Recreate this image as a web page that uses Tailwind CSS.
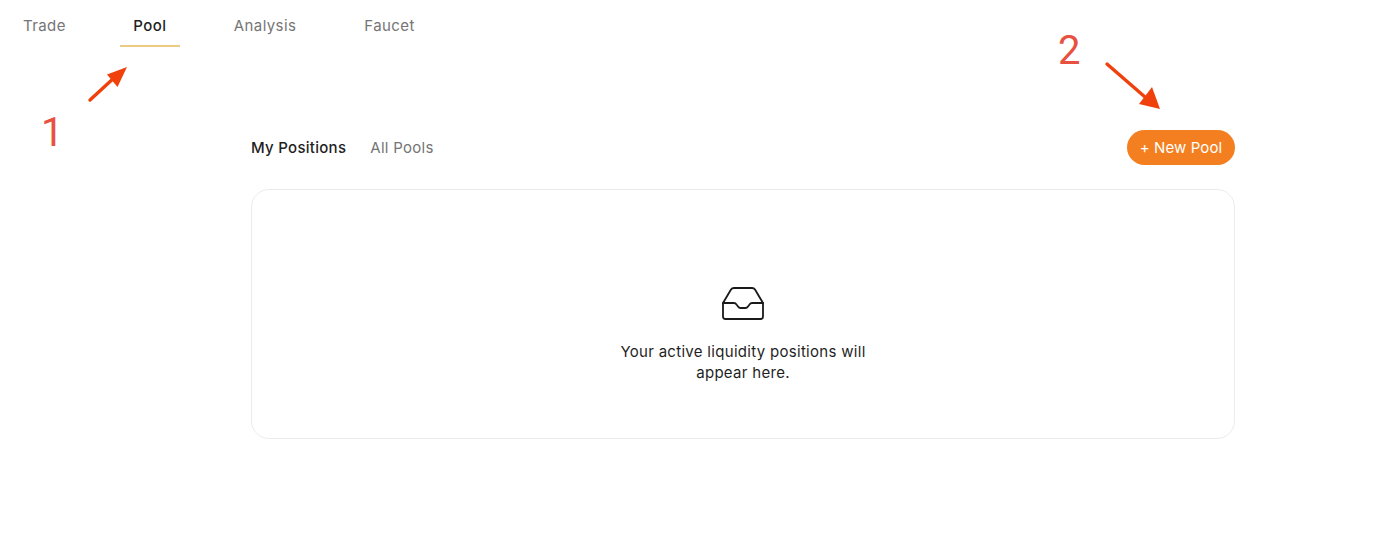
<!DOCTYPE html>
<html lang="en">
<head>
    <meta charset="UTF-8">
    <meta name="viewport" content="width=device-width, initial-scale=1.0">
    <title>Pool</title>
    <script src="https://cdn.jsdelivr.net/npm/@tailwindcss/browser@4"></script>
</head>
<body class="relative h-[539px] overflow-hidden bg-white font-['Inter',sans-serif]">

    <!-- Top nav -->
    <nav class="flex h-[47px] gap-10 pl-[9px] text-[15px] tracking-[0.4px] text-[#757575]">
        <a class="flex h-[46px] items-center px-3.5 pt-[7px]">Trade</a>
        <a class="flex h-[47px] w-[60px] flex-col items-center font-medium text-[#1f1f1f]">
            <span class="flex flex-1 items-center pt-[8px]">Pool</span>
            <span class="h-[2px] w-full bg-[#eccb85]"></span>
        </a>
        <a class="flex h-[46px] items-center px-3.5 pt-[7px]">Analysis</a>
        <a class="flex h-[46px] items-center px-3.5 pt-[7px]">Faucet</a>
    </nav>

    <main class="ml-[251px] w-[984px] pt-[83px]">
        <!-- Tabs + action -->
        <div class="flex h-[35px] items-center justify-between">
            <div class="flex gap-[24px] pt-[1px] text-[15px] tracking-[0.28px]">
                <span class="font-medium text-[#1f1f1f]">My Positions</span>
                <span class="text-[#757575]">All Pools</span>
            </div>
            <button class="flex h-[35px] w-[108px] items-center justify-center rounded-full bg-[#f47f20] pt-[1px] text-[15px] tracking-[0.1px] text-white">+ New Pool</button>
        </div>

        <!-- Empty state -->
        <div class="mt-6 flex h-[250px] flex-col items-center rounded-[18px] border border-[#ececec] pt-[95px]">
            <svg class="h-[36px] w-[44px]" viewBox="0 0 44 36" fill="none" stroke="#1a1a1a" stroke-width="1.8" stroke-linecap="round" stroke-linejoin="round">
                <path d="M2 18 L10 4.5 Q11 3 13 3 H31 Q33 3 34 4.5 L42 18 V31.5 Q42 34 39.5 34 H4.5 Q2 34 2 31.5 Z"/>
                <path d="M2 18 H13 Q14.5 18 15.5 19.5 L17 21.5 Q18 23 19.5 23 H24.5 Q26 23 27 21.5 L28.5 19.5 Q29.5 18 31 18 H42"/>
            </svg>
            <p class="mt-[20px] w-[270px] text-center text-[15px] leading-[21px] tracking-[0.3px] text-[#1f1f1f]">Your active liquidity positions will appear here.</p>
        </div>
    </main>

    <!-- Screenshot annotations -->
    <svg class="absolute left-[80px] top-[60px] h-[50px] w-[56px]" viewBox="0 0 56 50">
        <path d="M10 40 L35 17" stroke="#f0410c" stroke-width="3.4" stroke-linecap="round"/>
        <path d="M47 7 L37.5 27 L27 14.5 Z" fill="#f0410c"/>
    </svg>
    <span class="absolute left-[41px] top-[110px] font-['Roboto',sans-serif] text-[40px] leading-[45px] text-[#e8503f]">1</span>

    <svg class="absolute left-[1100px] top-[58px] h-[56px] w-[66px]" viewBox="0 0 66 56">
        <path d="M7 6 L45 39" stroke="#f0410c" stroke-width="3.4" stroke-linecap="round"/>
        <path d="M60 51 L39 46 L52 29 Z" fill="#f0410c"/>
    </svg>
    <span class="absolute left-[1058px] top-[28px] font-['Roboto',sans-serif] text-[40px] leading-[45px] text-[#e8503f]">2</span>
</body>
</html>
